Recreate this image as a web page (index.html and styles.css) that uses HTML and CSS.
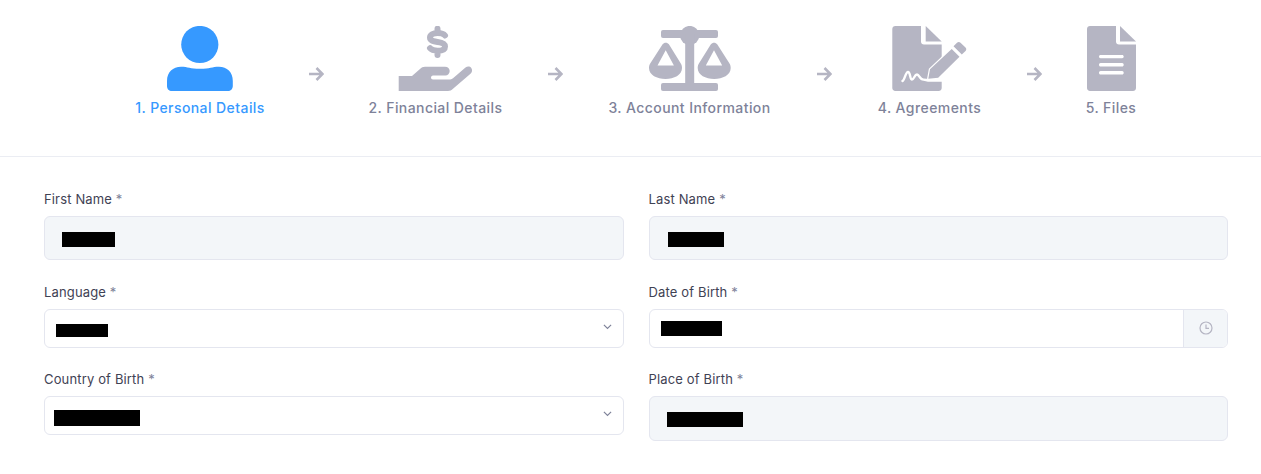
FILE: index.html
```html
<!DOCTYPE html>
<html lang="en">
<head>
<meta charset="utf-8">
<title>Personal Details</title>
<link rel="stylesheet" href="styles.css">
</head>
<body>
<header class="stepper">
  <div class="step step-1 is-active">
    <svg class="step-icon" viewBox="167 26 66 65"><circle cx="199.8" cy="44.5" r="18.6"/><path d="M167 81C167 72 173 66.7 181 66.7C188 66.7 190 68.8 200 68.8C210 68.8 212 66.7 219 66.7C227 66.7 232.8 72 232.8 81V86C232.8 89 230.5 91 228 91H172C169 91 167 89 167 86Z"/></svg>
    <span class="step-label">1. Personal Details</span>
  </div>
  <svg class="arrow" viewBox="0 0 16 16"><path d="M1 8H14M8.5 2L14.5 8L8.5 14"/></svg>
  <div class="step step-2">
    <svg class="step-icon" viewBox="398 26 75 65"><path d="M398.7 76H412L420 69C421.5 67.5 423 66.7 425 66.7H445C448 66.7 449.7 68.7 449.7 71C449.7 73.5 447.7 75.5 445.5 75.5H433C431.8 75.5 431 76.5 431 77.5C431 78.6 431.8 79.5 433 79.5H449C450.5 79.5 452 79 453 78.2L465.5 67.6C467.5 66 470 66.3 471.3 68C472.6 69.8 472.2 72.2 470.5 73.7L453 88.8C451.5 90.2 450 91 448 91H398.7Z"/><path class="dollar-s" d="M445 35.5C443.5 33.6 441 33 437.5 33C433 33 430 34.8 430 37.6C430 40.8 433.5 41.4 437.5 42C441.5 42.6 445 43.4 445 46.4C445 49.2 442 50.7 437.5 50.7C434 50.7 431.5 50 430 48.2M437.5 28.7V33M437.5 51V55"/></svg>
    <span class="step-label">2. Financial Details</span>
  </div>
  <svg class="arrow" viewBox="0 0 16 16"><path d="M1 8H14M8.5 2L14.5 8L8.5 14"/></svg>
  <div class="step step-3">
    <svg class="step-icon" viewBox="649 26 82 65"><circle cx="689.7" cy="35.5" r="9.6"/><rect x="661" y="30" width="57" height="8" rx="2"/><rect x="685.2" y="34" width="9" height="52"/><rect x="661" y="83" width="57" height="8" rx="2"/><path fill-rule="evenodd" d="M662.6 44.3C664 42.2 667.5 42.2 668.9 44.3L680.8 63.5C681.6 64.8 682 66 682 68C682 75 674 79 665.5 79C657 79 649 75 649 68C649 66 649.4 64.8 650.2 63.5ZM665.7 50.3L657.5 65.6H673.9Z"/><path fill-rule="evenodd" d="M710.9 44.3C712.3 42.2 715.8 42.2 717.2 44.3L729.5 63.5C730.3 64.8 730.7 66 730.7 68C730.7 75 722.7 79 714.2 79C705.7 79 697.7 75 697.7 68C697.7 66 698.1 64.8 698.9 63.5ZM714 50.3L705.8 65.6H722.2Z"/></svg>
    <span class="step-label">3. Account Information</span>
  </div>
  <svg class="arrow" viewBox="0 0 16 16"><path d="M1 8H14M8.5 2L14.5 8L8.5 14"/></svg>
  <div class="step step-4">
    <svg class="step-icon" viewBox="892 26 75 65"><path d="M895.3 26H921V41.5C921 43.3 922.2 44.5 924 44.5H941.7V88C941.7 89.8 940.2 91 938.7 91H895.3C893.6 91 892.3 89.6 892.3 88V29C892.3 27.3 893.6 26 895.3 26Z"/><path d="M925.7 26L941.7 41.5H925.7Z"/><path class="cutout" d="M942.5 56L934 68L928 78L932 81H942.5Z"/><path class="signature" d="M902.5 81C904.5 80.5 905.5 72 908 72C910.5 72 909.8 79.5 912 79.5C914 79.5 914.5 74.5 917 74.5C919.5 74.5 919.5 79.6 923.5 79.6C926 79.6 926.5 80.5 930 80.5H943"/><path class="pencil" d="M928.3 78.8L930 69.3L951.7 49L959.5 56.7L938.2 77.8ZM953.5 46.2L957 42.7C958 41.7 959.5 41.7 960.5 42.7L965.5 47.5C966.5 48.5 966.5 50 965.5 51L961.8 54.5Z"/></svg>
    <span class="step-label">4. Agreements</span>
  </div>
  <svg class="arrow" viewBox="0 0 16 16"><path d="M1 8H14M8.5 2L14.5 8L8.5 14"/></svg>
  <div class="step step-5">
    <svg class="step-icon" viewBox="1087 26 49 65"><path fill-rule="evenodd" d="M1090 26H1116V41.5C1116 43.3 1117.2 44.5 1119 44.5H1136V88C1136 89.8 1134.6 91 1133 91H1090C1088.3 91 1087 89.6 1087 88V29C1087 27.3 1088.3 26 1090 26ZM1100.5 55C1099.7 55 1099 55.7 1099 56.6C1099 57.5 1099.7 58.3 1100.5 58.3H1122.2C1123 58.3 1123.7 57.5 1123.7 56.6C1123.7 55.7 1123 55 1122.2 55ZM1100.5 63C1099.7 63 1099 63.8 1099 64.8C1099 65.8 1099.7 66.6 1100.5 66.6H1122.2C1123 66.6 1123.7 65.8 1123.7 64.8C1123.7 63.8 1123 63 1122.2 63ZM1100.5 71C1099.7 71 1099 71.8 1099 72.8C1099 73.8 1099.7 74.6 1100.5 74.6H1122.2C1123 74.6 1123.7 73.8 1123.7 72.8C1123.7 71.8 1123 71 1122.2 71Z"/><path d="M1120 26L1136 41.5H1120Z"/></svg>
    <span class="step-label">5. Files</span>
  </div>
</header>

<main class="form">
  <div class="field field-first">
    <label class="field-label">First Name <span class="req">*</span></label>
    <div class="control control-tall is-disabled"><span class="redact redact-first"></span></div>
  </div>
  <div class="field field-first">
    <label class="field-label">Last Name <span class="req">*</span></label>
    <div class="control control-tall is-disabled"><span class="redact redact-last"></span></div>
  </div>
  <div class="field">
    <label class="field-label">Language <span class="req">*</span></label>
    <div class="control control-select"><span class="redact redact-lang"></span><svg class="chevron" viewBox="0 0 10 6"><path d="M1 1L5 5L9 1"/></svg></div>
  </div>
  <div class="field">
    <label class="field-label">Date of Birth <span class="req">*</span></label>
    <div class="control control-group"><span class="redact redact-date"></span><span class="addon"><svg class="clock" viewBox="0 0 14 14"><circle cx="7" cy="7" r="6"/><path d="M7 3.6V7.4H10"/></svg></span></div>
  </div>
  <div class="field">
    <label class="field-label">Country of Birth <span class="req">*</span></label>
    <div class="control control-select"><span class="redact redact-country"></span><svg class="chevron" viewBox="0 0 10 6"><path d="M1 1L5 5L9 1"/></svg></div>
  </div>
  <div class="field">
    <label class="field-label">Place of Birth <span class="req">*</span></label>
    <div class="control control-place is-disabled"><span class="redact redact-place"></span></div>
  </div>
</main>
</body>
</html>
```
FILE: styles.css
```css
* { box-sizing: border-box; }
html, body { margin: 0; padding: 0; background: #fff; }
body { font-family: Inter, "Noto Sans", "Liberation Sans", sans-serif; color: #3f4254; }

.stepper {
  display: flex;
  align-items: flex-start;
  gap: 44px;
  height: 157px;
  padding: 26px 0 0 136px;
  border-bottom: 1px solid #ebedf3;
}
.step { display: flex; flex-direction: column; align-items: center; flex: none; }
.step-1 { width: 128px; }
.step-2 { width: 135px; }
.step-3 { width: 165px; }
.step-4 { width: 105px; margin-left: 1px; }
.step-5 { width: 48px; margin-left: 1px; }
.step-icon { display: block; height: 65px; fill: #b5b5c3; flex: none; }
.step-1 .step-icon { width: 66px; }
.step-2 .step-icon { width: 75px; }
.step-3 .step-icon { width: 82px; }
.step-4 .step-icon { width: 75px; }
.step-5 .step-icon { width: 49px; }
.step-label {
  margin-top: 7px;
  font-size: 14px;
  line-height: 20px;
  font-weight: 500;
  letter-spacing: 0.42px;
  white-space: nowrap;
  color: #7e8299;
}
.is-active .step-icon { fill: #3699ff; }
.is-active .step-label { color: #3699ff; }
.arrow {
  flex: none;
  width: 16px;
  height: 16px;
  margin-top: 40px;
  fill: none;
  stroke: #b5b5c3;
  stroke-width: 2.6;
}
.dollar-s { fill: none; stroke: #b5b5c3; stroke-width: 6; stroke-linecap: round; }
.cutout { fill: #fff; }
.signature { fill: none; stroke: #fff; stroke-width: 2.4; stroke-linecap: round; stroke-linejoin: round; }
.pencil { stroke: #fff; stroke-width: 2.4; paint-order: stroke; }

.form {
  display: grid;
  grid-template-columns: 1fr 1fr;
  column-gap: 25px;
  row-gap: 21px;
  align-items: start;
  padding: 32px 33px 0 44px;
}
.field-first { margin-bottom: 1px; }
.field-label {
  display: block;
  height: 20px;
  margin-bottom: 7px;
  font-size: 13px;
  line-height: 20px;
  letter-spacing: 0.15px;
  color: #3f4254;
}
.req { color: #7e8299; }
.control {
  display: flex;
  align-items: center;
  height: 39px;
  border: 1px solid #e4e6ef;
  border-radius: 6px;
  background: #fff;
}
.control-tall { height: 44px; }
.control-place { height: 45px; }
.is-disabled { background: #f3f6f9; }
.control-select { justify-content: space-between; padding-right: 11px; }
.control-group { justify-content: space-between; overflow: hidden; }
.redact { display: block; flex: none; background: #000; }
.redact-first { width: 53px; height: 15px; margin-left: 17px; margin-top: 2px; }
.redact-last { width: 56px; height: 15px; margin-left: 18px; margin-top: 2px; }
.redact-lang { width: 52px; height: 13px; margin-left: 11px; margin-top: 3px; }
.redact-date { width: 61px; height: 15px; margin-left: 11px; }
.redact-country { width: 86px; height: 16px; margin-left: 9px; margin-top: 4px; }
.redact-place { width: 76px; height: 15px; margin-left: 17px; margin-top: 1px; }
.chevron { width: 9px; height: 5.4px; margin-bottom: 3px; fill: none; stroke: #7e8299; stroke-width: 1.3; }
.addon {
  display: flex;
  align-items: center;
  justify-content: center;
  width: 44px;
  height: 100%;
  background: #f3f6f9;
  border-left: 1px solid #e4e6ef;
}
.clock { width: 14px; height: 14px; margin-bottom: 1px; fill: none; stroke: #b5b5c3; stroke-width: 1.2; }
```
